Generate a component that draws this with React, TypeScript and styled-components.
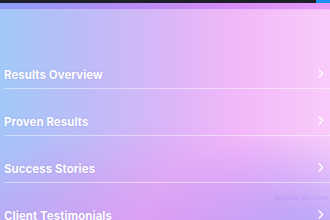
import styled, { createGlobalStyle } from 'styled-components'

const GlobalStyle = createGlobalStyle`
  html, body {
    margin: 0;
    padding: 0;
    width: 330px;
    height: 220px;
    overflow: hidden;
  }
  body {
    font-family: Inter, "Noto Sans", sans-serif;
  }
`

const Screen = styled.div`
  position: relative;
  width: 330px;
  height: 220px;
  overflow: hidden;
  display: flex;
  flex-direction: column;
  background:
    radial-gradient(ellipse 160px 110px at 300px 240px, rgba(168, 160, 250, 0.85), rgba(168, 160, 250, 0) 100%),
    radial-gradient(ellipse 220px 120px at 170px 240px, rgba(230, 140, 240, 0.7), rgba(230, 140, 240, 0) 100%),
    radial-gradient(ellipse 140px 120px at 0px 230px, rgba(190, 160, 245, 0.6), rgba(190, 160, 245, 0) 100%),
    linear-gradient(90deg, #a2c9f9 0%, #bcbcf7 25%, #dab6f7 50%, #f2b8f9 72%, #f9cbfa 100%);
`

const TopBar = styled.div`
  height: 3px;
  background: #1d2026;
  display: flex;
  justify-content: flex-end;
  flex-shrink: 0;
`

const TopBadge = styled.div`
  width: 14px;
  background: #1a8ff0;
`

const Strip = styled.div`
  height: 6px;
  flex-shrink: 0;
  background: linear-gradient(90deg, #8c9ef9 0%, #b88cf6 40%, #d88cf6 70%, #e69cf6 100%);
  border-bottom: 1px solid rgba(255, 255, 255, 0.35);
`

const List = styled.div`
  display: flex;
  flex-direction: column;
  padding-top: 32px;
`

const Row = styled.div`
  display: flex;
  align-items: center;
  justify-content: space-between;
  margin-left: 4px;
  padding: 25px 6px 5px 0;
  border-bottom: 1px solid rgba(255, 255, 255, 0.45);
`

const Label = styled.span`
  color: #ffffff;
  font-size: 11.4px;
  font-weight: 700;
  line-height: 16px;
  letter-spacing: 0.1px;
  text-shadow: 0 0 2px rgba(120, 100, 200, 0.35);
`

const Chevron = styled.svg`
  width: 6px;
  height: 9px;
  margin-top: -4px;
`

const Watermark = styled.div`
  position: absolute;
  right: 1px;
  top: 194px;
  font-size: 7px;
  color: rgba(140, 120, 230, 0.3);
  font-family: "Liberation Sans", sans-serif;
  white-space: nowrap;
`

const items = ['Results Overview', 'Proven Results', 'Success Stories', 'Client Testimonials']

export default function App() {
  return (
    <>
      <GlobalStyle />
      <Screen>
        <TopBar>
          <TopBadge />
        </TopBar>
        <Strip />
        <List>
          {items.map((label) => (
            <Row key={label}>
              <Label>{label}</Label>
              <Chevron viewBox="0 0 6 9">
                <path d="M1.2 1 L4.6 4.5 L1.2 8" fill="none" stroke="#fff" strokeWidth="1.4" strokeLinecap="round" strokeLinejoin="round" />
              </Chevron>
            </Row>
          ))}
        </List>
        <Watermark>Activate Windows</Watermark>
      </Screen>
    </>
  )
}
